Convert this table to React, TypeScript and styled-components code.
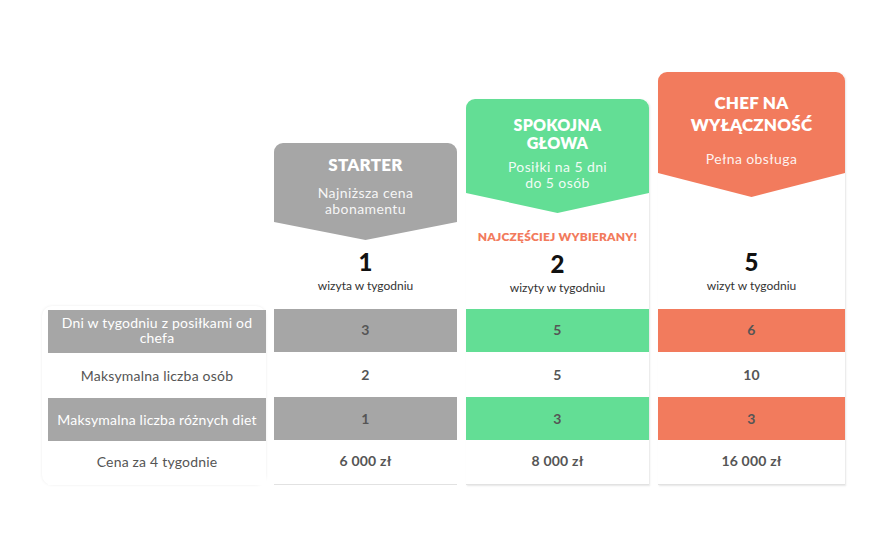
import React from "react";
import styled, { createGlobalStyle } from "styled-components";

const Global = createGlobalStyle`
  html, body { margin: 0; padding: 0; background: #ffffff; }
  body { font-family: "Lato", "Open Sans", sans-serif; width: 880px; height: 540px; overflow: hidden; }
`;

const GRAY = "#a6a6a6";
const GREEN = "#63de95";
const ORANGE = "#f27b5d";

const Page = styled.div`
  width: 880px;
  height: 540px;
  box-sizing: border-box;
  padding-top: 72px;
  padding-left: 42px;
`;

const Table = styled.div`
  display: grid;
  grid-template-columns: 223px 183px 183px 187px;
  column-gap: 9px;
  align-items: end;
`;

const LabelCard = styled.div`
  display: flex;
  flex-direction: column;
  padding: 4px 0 0 6px;
  border-radius: 10px;
  background: #fff;
  box-shadow: 0 0 3px rgba(0, 0, 0, 0.08);
  margin-right: -1px;
`;

const Column = styled.div<{ $shadow?: boolean }>`
  display: flex;
  flex-direction: column;
  border-radius: 8px 8px 0 0;
  background: #fff;
  box-shadow: ${(p) => (p.$shadow ? "1px 1px 2px rgba(0,0,0,0.10)" : "none")};
`;

const Header = styled.div<{ $bg: string; $h: number; $depth: number; $pt: number }>`
  height: ${(p) => p.$h}px;
  background: ${(p) => p.$bg};
  border-radius: 9px 9px 0 0;
  clip-path: polygon(0 0, 100% 0, 100% calc(100% - ${(p) => p.$depth}px), 50% 100%, 0 calc(100% - ${(p) => p.$depth}px));
  box-sizing: border-box;
  padding-top: ${(p) => p.$pt}px;
  display: flex;
  flex-direction: column;
  align-items: center;
  color: #fff;
  text-align: center;
`;

const Title = styled.div<{ $size: number; $lh: number }>`
  font-weight: 800;
  font-size: ${(p) => p.$size}px;
  line-height: ${(p) => p.$lh}px;
  letter-spacing: 0.2px;
`;

const Subtitle = styled.div<{ $mt: number }>`
  margin-top: ${(p) => p.$mt}px;
  font-size: 14px;
  line-height: 16px;
  color: rgba(255, 255, 255, 0.92);
  letter-spacing: 0.4px;
`;

const Info = styled.div<{ $h: number; $pb: number }>`
  height: ${(p) => p.$h}px;
  box-sizing: border-box;
  padding-bottom: ${(p) => p.$pb}px;
  display: flex;
  flex-direction: column;
  justify-content: flex-end;
  align-items: center;
  text-align: center;
`;

const Badge = styled.div`
  color: ${ORANGE};
  font-weight: 800;
  font-size: 12px;
  letter-spacing: 0.2px;
  margin-bottom: 7px;
`;

const Count = styled.div`
  font-weight: 900;
  font-size: 24px;
  line-height: 26px;
  color: #111;
`;

const Caption = styled.div`
  margin-top: 4px;
  font-size: 12px;
  line-height: 14px;
  color: #333;
`;

const Cell = styled.div<{ $bg?: string; $h: number; $label?: boolean; $pb?: number }>`
  height: ${(p) => p.$h}px;
  background: ${(p) => p.$bg || "#fff"};
  display: flex;
  align-items: center;
  justify-content: center;
  text-align: center;
  box-sizing: border-box;
  padding: 0 6px ${(p) => p.$pb || 0}px;
  font-size: 14px;
  line-height: 15px;
  font-weight: ${(p) => (p.$label ? 400 : 700)};
  color: ${(p) => (p.$bg && p.$label ? "#fff" : "#555")};
  letter-spacing: 0.2px;
`;

const Bottom = styled.div`
  height: 1px;
  background: #e2e2e2;
`;

const rowHeights = [43, 45, 43, 44];
const rowPad = [3, 0, 0, 4];

const labels = [
  "Dni w tygodniu z posiłkami od chefa",
  "Maksymalna liczba osób",
  "Maksymalna liczba różnych diet",
  "Cena za 4 tygodnie",
];

type Plan = {
  title: string[];
  sub: string[];
  color: string;
  header: number;
  depth: number;
  pt: number;
  titleSize: number;
  titleLh: number;
  subMt: number;
  info: number;
  infoPb: number;
  badge?: string;
  count: string;
  caption: string;
  values: string[];
  shadow?: boolean;
};

const plans: Plan[] = [
  {
    title: ["STARTER"],
    sub: ["Najniższa cena", "abonamentu"],
    color: GRAY,
    header: 97,
    depth: 18,
    pt: 12,
    titleSize: 17,
    titleLh: 20,
    subMt: 10,
    info: 69,
    infoPb: 16,
    count: "1",
    caption: "wizyta w tygodniu",
    values: ["3", "2", "1", "6 000 zł"],
  },
  {
    title: ["SPOKOJNA", "GŁOWA"],
    sub: ["Posiłki na 5 dni", "do 5 osób"],
    color: GREEN,
    header: 114,
    depth: 20,
    pt: 17,
    titleSize: 16,
    titleLh: 18,
    subMt: 7,
    info: 96,
    infoPb: 14,
    badge: "NAJCZĘŚCIEJ WYBIERANY!",
    count: "2",
    caption: "wizyty w tygodniu",
    values: ["5", "5", "3", "8 000 zł"],
    shadow: true,
  },
  {
    title: ["CHEF NA", "WYŁĄCZNOŚĆ"],
    sub: ["Pełna obsługa"],
    color: ORANGE,
    header: 125,
    depth: 24,
    pt: 20,
    titleSize: 17,
    titleLh: 22,
    subMt: 15,
    info: 112,
    infoPb: 16,
    count: "5",
    caption: "wizyt w tygodniu",
    values: ["6", "10", "3", "16 000 zł"],
    shadow: true,
  },
];

export default function App() {
  return (
    <Page>
      <Global />
      <Table>
        <LabelCard>
          {labels.map((l, i) => (
            <Cell key={l} $h={rowHeights[i]} $pb={rowPad[i]} $bg={i % 2 === 0 ? GRAY : undefined} $label>
              {l}
            </Cell>
          ))}
        </LabelCard>
        {plans.map((p) => (
          <Column key={p.count} $shadow={p.shadow}>
            <Header $bg={p.color} $h={p.header} $depth={p.depth} $pt={p.pt}>
              <Title $size={p.titleSize} $lh={p.titleLh}>
                {p.title.map((t) => (
                  <div key={t}>{t}</div>
                ))}
              </Title>
              <Subtitle $mt={p.subMt}>
                {p.sub.map((t) => (
                  <div key={t}>{t}</div>
                ))}
              </Subtitle>
            </Header>
            <Info $h={p.info} $pb={p.infoPb}>
              {p.badge && <Badge>{p.badge}</Badge>}
              <Count>{p.count}</Count>
              <Caption>{p.caption}</Caption>
            </Info>
            {p.values.map((v, i) => (
              <Cell key={i} $h={rowHeights[i]} $pb={rowPad[i]} $bg={i % 2 === 0 ? p.color : undefined}>
                {v}
              </Cell>
            ))}
            <Bottom />
          </Column>
        ))}
      </Table>
    </Page>
  );
}
